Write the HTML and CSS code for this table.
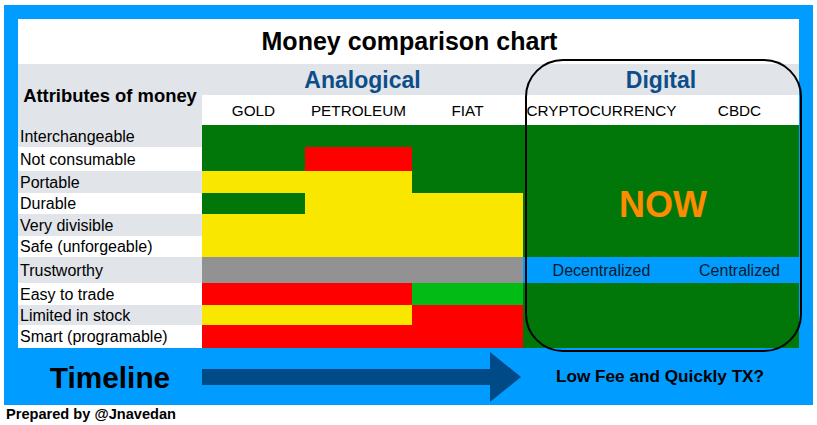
FILE: index.html
```html
<!DOCTYPE html>
<html lang="en">
<head>
<meta charset="utf-8">
<title>Money comparison chart</title>
<link rel="stylesheet" href="styles.css">
</head>
<body>
<div class="frame">
  <div class="sheet">
    <div class="title">Money comparison chart</div>
    <div class="chart">
      <div class="attr-head">Attributes of money</div>
      <div class="group analog">Analogical</div>
      <div class="group digital">Digital</div>
      <div class="col">GOLD</div>
      <div class="col">PETROLEUM</div>
      <div class="col">FIAT</div>
      <div class="col">CRYPTOCURRENCY</div>
      <div class="col">CBDC</div>

      <div class="label alt">Interchangeable</div>
      <div class="c g"></div><div class="c g"></div><div class="c g"></div>
      <div class="now">NOW</div>

      <div class="label">Not consumable</div>
      <div class="c g"></div><div class="c r"></div><div class="c g"></div>

      <div class="label alt">Portable</div>
      <div class="c y"></div><div class="c y"></div><div class="c g"></div>

      <div class="label">Durable</div>
      <div class="c g"></div><div class="c y"></div><div class="c y"></div>

      <div class="label alt">Very divisible</div>
      <div class="c y"></div><div class="c y"></div><div class="c y"></div>

      <div class="label">Safe (unforgeable)</div>
      <div class="c y"></div><div class="c y"></div><div class="c y"></div>

      <div class="label alt">Trustworthy</div>
      <div class="c gr"></div><div class="c gr"></div><div class="c gr"></div>
      <div class="c b">Decentralized</div><div class="c b">Centralized</div>

      <div class="label">Easy to trade</div>
      <div class="c r"></div><div class="c r"></div><div class="c lg"></div>
      <div class="digital-low"></div>

      <div class="label alt">Limited in stock</div>
      <div class="c y"></div><div class="c y"></div><div class="c r"></div>

      <div class="label">Smart (programable)</div>
      <div class="c r"></div><div class="c r"></div><div class="c r"></div>
    </div>
  </div>
  <div class="timeline">
    <div class="tl-label">Timeline</div>
    <div class="tl-arrow">
      <svg width="319" height="50" viewBox="0 0 319 50" aria-hidden="true">
        <rect x="0" y="17" width="289" height="16" fill="#004B87"/>
        <polygon points="288,0 319,25 288,50" fill="#004B87"/>
      </svg>
    </div>
    <div class="tl-question">Low Fee and Quickly TX?</div>
  </div>
  <div class="digital-outline"></div>
</div>
<div class="credit">Prepared by @Jnavedan</div>
</body>
</html>
```
FILE: styles.css
```css
html, body {
  margin: 0;
  padding: 0;
  background: #ffffff;
  font-family: "Liberation Sans", Arial, sans-serif;
  color: #000;
}

.frame {
  position: relative;
  margin: 5px 0 0 4px;
  width: 809px;
  height: 400px;
  box-sizing: border-box;
  background: #009CFF;
  padding: 14px 14px 0 14px;
}

.sheet {
  background: #ffffff;
  width: 781px;
}

.title {
  height: 45px;
  display: flex;
  align-items: center;
  justify-content: center;
  font-weight: bold;
  font-size: 25px;
  padding-left: 2px;
}

.chart {
  display: grid;
  grid-template-columns: 184px 103px 107px 111px 157px 119px;
  grid-template-rows: 31px 30px 22px 24px 22px 21px 22px 21px 26px 22px 20px 23px;
}

.attr-head {
  grid-row: 1 / 3;
  grid-column: 1;
  background: #E1E4E8;
  display: flex;
  align-items: center;
  justify-content: center;
  font-weight: bold;
  font-size: 18.4px;
  padding-top: 3px;
}

.group {
  background: #E1E4E8;
  color: #0D4E8A;
  font-weight: bold;
  font-size: 23px;
  display: flex;
  align-items: center;
  justify-content: center;
  padding-top: 1px;
}
.analog { grid-column: 2 / 5; }
.digital { grid-column: 5 / 7; }

.col {
  display: flex;
  align-items: center;
  justify-content: center;
  font-size: 15.3px;
  background: #fff;
  white-space: nowrap;
  padding-top: 1px;
}

.label {
  display: flex;
  align-items: center;
  font-size: 16px;
  padding-left: 2px;
  padding-top: 1px;
  background: #fff;
  white-space: nowrap;
  line-height: 1;
}
.label.alt { background: #E1E4E8; }

.c {
  display: flex;
  align-items: center;
  justify-content: center;
}
.g { background: #007708; }
.lg { background: #02BB14; }
.r { background: #FF0000; }
.y { background: #F9E700; }
.gr { background: #929292; }
.b {
  background: #009CFF;
  font-size: 16px;
  color: #0a1a2a;
  padding-top: 1px;
}

.now {
  grid-column: 5 / 7;
  grid-row: 3 / 9;
  background: #007708;
  color: #FF8B00;
  font-weight: bold;
  font-size: 36px;
  display: flex;
  align-items: center;
  justify-content: center;
  padding-top: 28px;
  padding-left: 4px;
}

.digital-low {
  grid-column: 5 / 7;
  grid-row: 10 / 13;
  background: #007708;
}

.timeline {
  display: grid;
  grid-template-columns: 184px 321px 276px;
  height: 57px;
  align-items: center;
}
.tl-label {
  text-align: center;
  font-weight: bold;
  font-size: 29.8px;
  padding-top: 2px;
}
.tl-arrow {
  display: flex;
  align-items: center;
}
.tl-arrow svg { display: block; }
.tl-question {
  text-align: center;
  font-weight: bold;
  font-size: 17.2px;
  padding-right: 2px;
}

.digital-outline {
  position: absolute;
  left: 521px;
  top: 54px;
  width: 277px;
  height: 293px;
  box-sizing: border-box;
  border: 2px solid #000;
  border-radius: 38px;
  pointer-events: none;
}

.credit {
  font-weight: bold;
  font-size: 14.6px;
  margin: 1px 0 0 6px;
}
```
